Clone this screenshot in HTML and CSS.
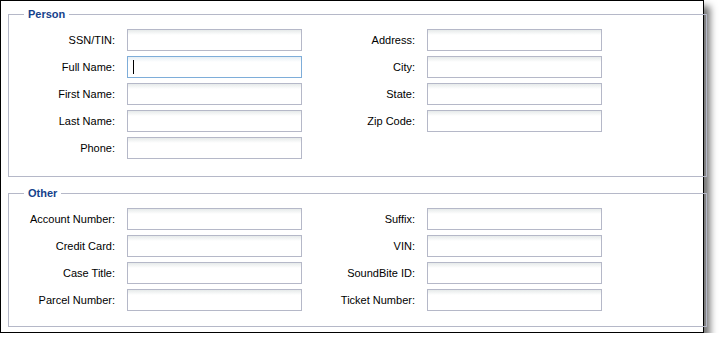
FILE: index.html
```html
<!DOCTYPE html>
<html lang="en">
<head>
    <meta charset="UTF-8">
    <title>Search Criteria</title>
    <link rel="stylesheet" href="styles.css">
</head>
<body>
    <div class="panel">
        <!-- Person -->
        <fieldset class="group person">
            <legend>Person</legend>
            <div class="field-grid">
                <label for="ssn">SSN/TIN:</label>
                <input type="text" id="ssn">
                <label for="address">Address:</label>
                <input type="text" id="address">

                <label for="full-name">Full Name:</label>
                <input type="text" id="full-name" class="focused">
                <label for="city">City:</label>
                <input type="text" id="city">

                <label for="first-name">First Name:</label>
                <input type="text" id="first-name">
                <label for="state">State:</label>
                <input type="text" id="state">

                <label for="last-name">Last Name:</label>
                <input type="text" id="last-name">
                <label for="zip">Zip Code:</label>
                <input type="text" id="zip">

                <label for="phone">Phone:</label>
                <input type="text" id="phone">
            </div>
        </fieldset>

        <!-- Other -->
        <fieldset class="group other">
            <legend>Other</legend>
            <div class="field-grid">
                <label for="account">Account Number:</label>
                <input type="text" id="account">
                <label for="suffix">Suffix:</label>
                <input type="text" id="suffix">

                <label for="card">Credit Card:</label>
                <input type="text" id="card">
                <label for="vin">VIN:</label>
                <input type="text" id="vin">

                <label for="case-title">Case Title:</label>
                <input type="text" id="case-title">
                <label for="soundbite">SoundBite ID:</label>
                <input type="text" id="soundbite">

                <label for="parcel">Parcel Number:</label>
                <input type="text" id="parcel">
                <label for="ticket">Ticket Number:</label>
                <input type="text" id="ticket">
            </div>
        </fieldset>
    </div>
</body>
</html>
```

FILE: styles.css
```css
body {
    margin: 0;
    padding: 0;
    background-color: #fff;
    font-family: "Liberation Sans", Arial, sans-serif;
    font-size: 11px;
    color: #000;
}

.panel {
    width: 702px;
    height: 331px;
    border: 1px solid #000;
    background-color: #fff;
    box-shadow: 6px 6px 7px rgba(0, 0, 0, 0.55);
}

.group {
    margin: 0 0 0 7px;
    width: 691px;
    padding: 0 0 17px 6px;
    border: 1px solid #b5b8c8;
}

.person {
    margin-top: 6px;
}

.other {
    margin-top: 9px;
    padding-bottom: 15px;
}

legend {
    margin-left: 9px;
    padding: 0 4px;
    line-height: 14px;
    font-weight: bold;
    color: #15428b;
}

.field-grid {
    display: grid;
    grid-template-columns: 112px 175px 125px 175px;
    grid-auto-rows: 22px;
    row-gap: 5px;
    margin-top: 8px;
}

.field-grid label {
    align-self: center;
    text-align: right;
    padding-right: 12px;
    color: #000;
}

.field-grid input {
    box-sizing: border-box;
    width: 175px;
    height: 22px;
    margin: 0;
    padding: 0 3px;
    border: 1px solid #b5b8c8;
    background: linear-gradient(#e6eaea, #fff 5px);
    font-family: inherit;
    font-size: 11px;
    outline: none;
}

/* focused field with its caret */
.field-grid input.focused {
    border-color: #7eadd9;
    background-image: linear-gradient(#000, #000), linear-gradient(#e6eef4, #fff 5px);
    background-size: 1px 14px, 100% 100%;
    background-position: 5px 3px, 0 0;
    background-repeat: no-repeat;
}
```
